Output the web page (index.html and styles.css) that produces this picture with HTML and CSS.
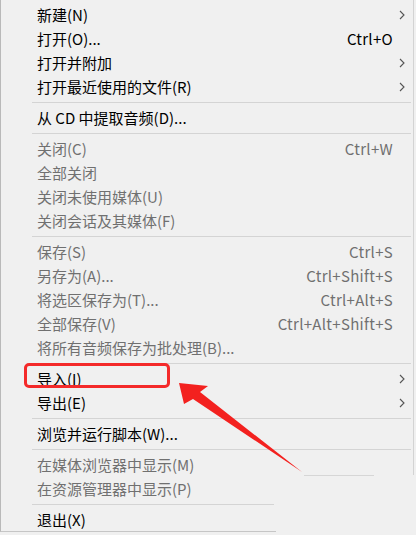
FILE: index.html
```html
<!DOCTYPE html>
<html lang="zh-CN">
<head>
<meta charset="utf-8">
<title>文件菜单</title>
<link rel="stylesheet" href="styles.css">
</head>
<body>
<div class="menu">
  <div class="row"><span class="label">新建(N)</span><span class="key"></span><span class="sub"><svg viewBox="0 0 6 10" width="6" height="10"><polyline points="1,1 5,5 1,9"/></svg></span></div>
  <div class="row"><span class="label">打开(O)...</span><span class="key">Ctrl+O</span><span class="sub"></span></div>
  <div class="row"><span class="label">打开并附加</span><span class="key"></span><span class="sub"><svg viewBox="0 0 6 10" width="6" height="10"><polyline points="1,1 5,5 1,9"/></svg></span></div>
  <div class="row"><span class="label">打开最近使用的文件(R)</span><span class="key"></span><span class="sub"><svg viewBox="0 0 6 10" width="6" height="10"><polyline points="1,1 5,5 1,9"/></svg></span></div>
  <div class="sep"></div>
  <div class="row"><span class="label">从 CD 中提取音频(D)...</span><span class="key"></span><span class="sub"></span></div>
  <div class="sep"></div>
  <div class="row off"><span class="label">关闭(C)</span><span class="key">Ctrl+W</span><span class="sub"></span></div>
  <div class="row off"><span class="label">全部关闭</span><span class="key"></span><span class="sub"></span></div>
  <div class="row off"><span class="label">关闭未使用媒体(U)</span><span class="key"></span><span class="sub"></span></div>
  <div class="row off"><span class="label">关闭会话及其媒体(F)</span><span class="key"></span><span class="sub"></span></div>
  <div class="sep"></div>
  <div class="row off"><span class="label">保存(S)</span><span class="key">Ctrl+S</span><span class="sub"></span></div>
  <div class="row off"><span class="label">另存为(A)...</span><span class="key">Ctrl+Shift+S</span><span class="sub"></span></div>
  <div class="row off"><span class="label">将选区保存为(T)...</span><span class="key">Ctrl+Alt+S</span><span class="sub"></span></div>
  <div class="row off"><span class="label">全部保存(V)</span><span class="key">Ctrl+Alt+Shift+S</span><span class="sub"></span></div>
  <div class="row off"><span class="label">将所有音频保存为批处理(B)...</span><span class="key"></span><span class="sub"></span></div>
  <div class="sep"></div>
  <div class="row"><span class="label">导入(I)</span><span class="key"></span><span class="sub"><svg viewBox="0 0 6 10" width="6" height="10"><polyline points="1,1 5,5 1,9"/></svg></span></div>
  <div class="row"><span class="label">导出(E)</span><span class="key"></span><span class="sub"><svg viewBox="0 0 6 10" width="6" height="10"><polyline points="1,1 5,5 1,9"/></svg></span></div>
  <div class="sep"></div>
  <div class="row"><span class="label">浏览并运行脚本(W)...</span><span class="key"></span><span class="sub"></span></div>
  <div class="sep"></div>
  <div class="row off"><span class="label">在媒体浏览器中显示(M)</span><span class="key"></span><span class="sub"></span></div>
  <div class="row off"><span class="label">在资源管理器中显示(P)</span><span class="key"></span><span class="sub"></span></div>
  <div class="sep sep-short"></div>
  <div class="row"><span class="label">退出(X)</span><span class="key"></span><span class="sub"></span></div>

  <div class="patch"></div>
  <div class="highlight"></div>
  <svg class="arrow" viewBox="0 0 416 535" width="416" height="535">
    <polygon points="179,383 208,386 200,392 302,472 193,399 184,404"/>
  </svg>
</div>
</body>
</html>
```

FILE: styles.css
```css
html, body {
  margin: 0;
  padding: 0;
  background: #f0f0f0;
}

body {
  width: 416px;
  height: 535px;
  overflow: hidden;
  font-family: "Noto Sans CJK SC", "Noto Sans", sans-serif;
  font-size: 15px;
  color: #000;
}

.menu {
  position: relative;
  width: 414px;
  height: 532px;
  padding-top: 3px;
  box-sizing: border-box;
  background: #f0f0f0;
  border-left: 1px solid #b9b9b9;
  border-right: 1px solid #d3d3d3;
  border-bottom: 1px solid #c6c6c6;
}

.row {
  display: flex;
  align-items: center;
  height: 24px;
  padding-left: 36px;
  line-height: 24px;
  white-space: nowrap;
}

.row.off {
  color: #707070;
}

.label {
  flex: 1;
}

.key {
  text-align: right;
  letter-spacing: 0.3px;
}

.sub {
  width: 20px;
  height: 24px;
  display: flex;
  align-items: center;
  padding-left: 6px;
  box-sizing: border-box;
}

.sub svg polyline {
  fill: none;
  stroke: #555;
  stroke-width: 1.1;
}

.sep {
  height: 1px;
  margin: 3px 2px 3px 31px;
  background: #d4d4d4;
}

.sep-short {
  width: 242px;
}

.patch {
  position: absolute;
  left: 275px;
  top: 475px;
  right: -2px;
  bottom: -2px;
  background: #f0f0f0;
}

.patch::before {
  content: "";
  position: absolute;
  left: 28px;
  top: 0;
  width: 70px;
  height: 1px;
  background: #d6d6d6;
}

.highlight {
  position: absolute;
  left: 23px;
  top: 363px;
  width: 146px;
  height: 25px;
  box-sizing: border-box;
  border: 3px solid #f42a2a;
  border-radius: 5px;
}

.arrow {
  position: absolute;
  left: -1px;
  top: 0;
  pointer-events: none;
}

.arrow polygon {
  fill: #f3211f;
}
```
